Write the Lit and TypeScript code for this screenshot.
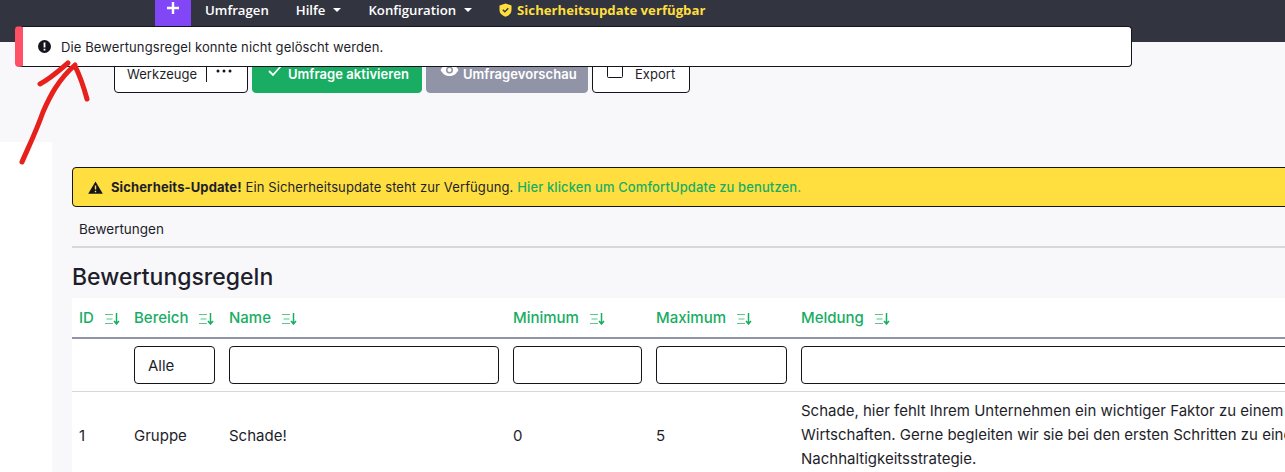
import { LitElement, html, css, svg } from "lit";
import { customElement } from "lit/decorators.js";

const sortIcon = html`<svg class="sort" width="15" height="12" viewBox="0 0 15 12"><path d="M0 1.500h8M1.500 6h6M0 10.500h8" stroke="#5cc48c" stroke-width="1.200" fill="none"/><path d="M11.500 0v10M9 8l2.500 3L14 8" stroke="#18ad63" stroke-width="1.500" fill="none"/></svg>`;

const columns = ["ID", "Bereich", "Name", "Minimum", "Maximum", "Meldung"];

@customElement("app-root")
export class AppRoot extends LitElement {
  static styles = css`
    :host {
      display: block;
      position: relative;
      height: 472px;
      overflow: hidden;
      background: #f8f8fb;
      font-family: Inter, "Liberation Sans", sans-serif;
      font-size: 15px;
      color: #1e1e2a;
    }
    .nav {
      height: 42px;
      box-sizing: border-box;
      background: #32343f;
      display: flex;
      align-items: flex-start;
      padding-left: 155px;
      color: #fff;
      font-weight: 600;
      font-size: 13.2px;
      font-family: "Open Sans", sans-serif;
    }
    .plus {
      width: 36px;
      height: 26px;
      box-sizing: border-box;
      padding-top: 1px;
      background: #8146f6;
      display: flex;
      align-items: flex-start;
      justify-content: center;
      margin-right: 14px;
    }
    .nav-item {
      height: 20px;
      display: flex;
      align-items: center;
      margin-right: 27px;
      gap: 8px;
      white-space: nowrap;
    }
    .caret {
      width: 0;
      height: 0;
      border-left: 4px solid transparent;
      border-right: 4px solid transparent;
      border-top: 4px solid #fff;
    }
    .update {
      color: #ffdf40;
      font-weight: 700;
      gap: 5px;
    }
    .toolbar {
      height: 100px;
      box-sizing: border-box;
      padding: 18px 0 0 114px;
      display: flex;
      align-items: flex-start;
      gap: 4px;
      font-size: 13px;
      letter-spacing: 0.05px;
    }
    .btn {
      height: 33px;
      box-sizing: border-box;
      padding-bottom: 5px;
      border-radius: 4px;
      border: 1px solid #14141c;
      background: #fff;
      display: flex;
      align-items: center;
      white-space: nowrap;
    }
    .tools { width: 134px; padding-left: 12px; }
    .tools .sep { width: 1px; height: 16px; background: #14141c; margin: 0 9px; }
    .dots { margin-top: -6px; }
    .activate {
      width: 170px;
      background: #18ad63;
      border-color: #18ad63;
      color: #fff;
      font-weight: 600;
      padding-left: 15px;
      gap: 6px;
    }
    .preview {
      width: 162px;
      background: #9094a6;
      border-color: #9094a6;
      color: #fff;
      font-weight: 600;
      padding-left: 13px;
      gap: 4px;
    }
    .export { width: 98px; padding-left: 14px; gap: 12px; }
    .lift-small { margin-top: -6px; }
    .lift-large { margin-top: -9px; }
    .body { display: flex; height: 330px; }
    .side { width: 52px; flex: none; background: #fff; }
    .main { flex: 1; min-width: 0; padding: 25px 0 0 20px; overflow: hidden; }
    .warn {
      width: 1300px;
      height: 40px;
      box-sizing: border-box;
      background: #ffdf40;
      border: 1px solid #14141c;
      border-radius: 4px;
      display: flex;
      align-items: center;
      padding-left: 15px;
      gap: 8px;
      font-size: 13px;
      letter-spacing: 0.11px;
      white-space: nowrap;
    }
    .warn b { font-weight: 700; }
    .warn .link { color: #18ad63; font-weight: 500; }
    .crumb {
      height: 39px;
      border-bottom: 2px solid #d6d6de;
      box-sizing: border-box;
      padding: 2px 0 0 7px;
      display: flex;
      align-items: center;
      font-size: 13.5px;
      margin-top: 2px;
      width: 1300px;
    }
    h1 {
      margin: 0;
      height: 50px;
      box-sizing: border-box;
      padding-top: 8px;
      display: flex;
      align-items: center;
      font-weight: 500;
      font-size: 23px;
    }
    table {
      border-collapse: collapse;
      table-layout: fixed;
      width: 1400px;
      background: #fff;
    }
    th, td { padding: 0 7px; text-align: left; box-sizing: border-box; }
    th {
      height: 40px;
      border-bottom: 2px solid #9094a6;
      color: #18ad63;
      font-weight: 500;
      font-size: 15px;
      white-space: nowrap;
    }
    .sort { margin-left: 11px; vertical-align: -2px; }
    .filter td { height: 53px; border-bottom: 1px solid #d8d8d8; }
    .input {
      height: 38px;
      box-sizing: border-box;
      border: 1px solid #14141c;
      border-radius: 4px;
      background: #fff;
      display: flex;
      align-items: center;
      padding: 2px 0 0 13px;
    }
    .data td { height: 88px; font-size: 15px; }
    .msg { white-space: nowrap; line-height: 24px; }
    .toast {
      position: absolute;
      left: 15px;
      top: 26px;
      width: 1117px;
      height: 41px;
      box-sizing: border-box;
      background: #fff;
      border: 1px solid #14141c;
      border-left: 8px solid #ff5066;
      border-radius: 4px;
      display: flex;
      align-items: center;
      padding-left: 15px;
      gap: 10px;
      font-size: 13px;
      letter-spacing: 0.11px;
    }
    .arrow { position: absolute; left: 0; top: 0; pointer-events: none; }
  `;

  render() {
    return html`
      <div class="nav">
        <div class="plus">
          <svg width="14" height="14" viewBox="0 0 14 14"><path d="M7 1v12M1 7h12" stroke="#fff" stroke-width="2.400"/></svg>
        </div>
        <div class="nav-item">Umfragen</div>
        <div class="nav-item">Hilfe <span class="caret"></span></div>
        <div class="nav-item">Konfiguration <span class="caret"></span></div>
        <div class="nav-item update">
          <svg width="13" height="14" viewBox="0 0 13 14"><path d="M6.500 0.500 12.500 2.500V7c0 3.500-3 5.700-6 6.700-3-1-6-3.200-6-6.700V2.500Z" fill="#ffdf40"/><path d="M3.800 6.800l2 2 3.500-3.500" stroke="#32343f" stroke-width="1.300" fill="none"/></svg>
          Sicherheitsupdate verfügbar
        </div>
      </div>
      <div class="toolbar">
        <div class="btn tools">Werkzeuge<span class="sep"></span>
          <svg class="dots" width="16" height="4" viewBox="0 0 16 4"><circle cx="2" cy="2" r="1.500" fill="#14141c"/><circle cx="8" cy="2" r="1.500" fill="#14141c"/><circle cx="14" cy="2" r="1.500" fill="#14141c"/></svg>
        </div>
        <div class="btn activate">
          <svg class="lift-small" width="14" height="12" viewBox="0 0 14 12"><path d="M1 6l4 4 8-9" stroke="#fff" stroke-width="1.800" fill="none"/></svg>
          Umfrage aktivieren
        </div>
        <div class="btn preview">
          <svg class="lift-large" width="19" height="14" viewBox="0 0 19 14"><path d="M0.500 7C3 2.500 6 1 9.500 1S16 2.500 18.500 7C16 11.500 13 13 9.500 13S3 11.500 0.500 7Z" fill="#fff"/><circle cx="9.500" cy="7" r="3.500" fill="#9094a6"/><circle cx="9.500" cy="7" r="2" fill="#fff"/></svg>
          Umfragevorschau
        </div>
        <div class="btn export">
          <svg class="lift-large" width="16" height="16" viewBox="0 0 16 16"><rect x="0.500" y="0.500" width="15" height="15" rx="1" fill="none" stroke="#14141c"/></svg>
          Export
        </div>
      </div>
      <div class="body">
        <div class="side"></div>
        <div class="main">
          <div class="warn">
            <svg width="15" height="13" viewBox="0 0 15 13"><path d="M7.500 0.500 14.800 12.800H0.200Z" fill="#14141c"/><path d="M7.500 4.500v4M7.500 9.800v1.400" stroke="#ffdf40" stroke-width="1.400"/></svg>
            <span><b>Sicherheits-Update!</b> Ein Sicherheitsupdate steht zur Verfügung. <span class="link">Hier klicken um ComfortUpdate zu benutzen.</span></span>
          </div>
          <div class="crumb">Bewertungen</div>
          <h1>Bewertungsregeln</h1>
          <table>
            <colgroup>
              <col style="width:55px" /><col style="width:95px" /><col style="width:284px" />
              <col style="width:143px" /><col style="width:145px" /><col />
            </colgroup>
            <tr>${columns.map((c) => html`<th>${c}${sortIcon}</th>`)}</tr>
            <tr class="filter">
              <td></td>
              <td><div class="input">Alle</div></td>
              <td><div class="input"></div></td>
              <td><div class="input"></div></td>
              <td><div class="input"></div></td>
              <td><div class="input"></div></td>
            </tr>
            <tr class="data">
              <td>1</td>
              <td>Gruppe</td>
              <td>Schade!</td>
              <td>0</td>
              <td>5</td>
              <td class="msg">Schade, hier fehlt Ihrem Unternehmen ein wichtiger Faktor zu einem<br />Wirtschaften. Gerne begleiten wir sie bei den ersten Schritten zu einer<br />Nachhaltigkeitsstrategie.</td>
            </tr>
          </table>
        </div>
      </div>
      <div class="toast">
        <svg width="13" height="13" viewBox="0 0 13 13"><circle cx="6.500" cy="6.500" r="6.500" fill="#14141c"/><path d="M6.500 2.500v5M6.500 8.800v1.700" stroke="#fff" stroke-width="1.800"/></svg>
        Die Bewertungsregel konnte nicht gelöscht werden.
      </div>
      <svg class="arrow" width="100" height="170" viewBox="0 0 100 170">
        ${svg`<path d="M22 162C28 148 36 132 43 112 50 96 58 80 75 65M40 84C50 79 60 70 68 63M75 66C80 76 84 88 87 99" fill="none" stroke="#e8201c" stroke-width="5" stroke-linecap="round" stroke-linejoin="round"/>`}
      </svg>
    `;
  }
}
